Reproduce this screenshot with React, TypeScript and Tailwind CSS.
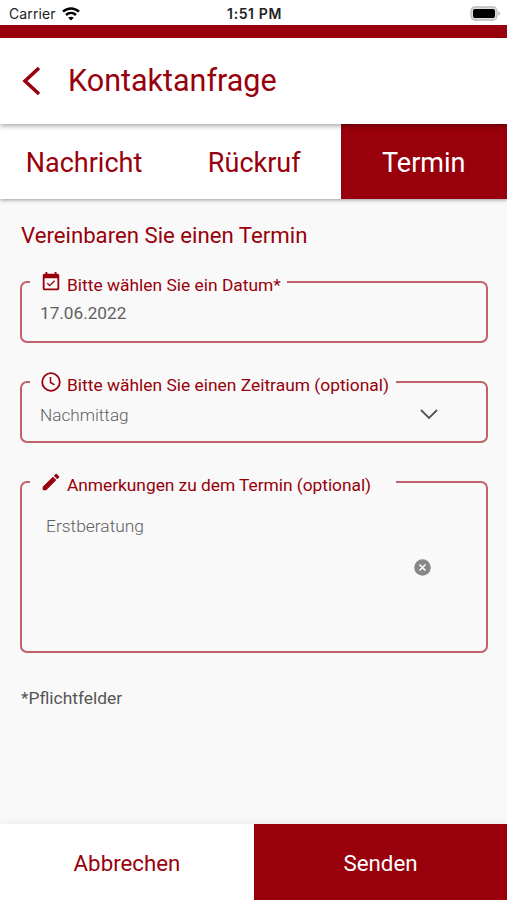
import type { ReactNode } from 'react';
import { MdEdit, MdEventAvailable } from 'react-icons/md';

interface FieldProps {
  icon: ReactNode;
  label: string;
  legendClass: string;
  className: string;
  children: ReactNode;
}

function Field({ icon, label, legendClass, className, children }: FieldProps) {
  return (
    <fieldset className={`rounded-[7px] border-2 border-[#bf626a] px-2 ${className}`}>
      <legend className={`flex h-6 items-center pl-[10px] ${legendClass}`}>
        <span className="flex w-[27px] shrink-0">{icon}</span>
        <span className="whitespace-nowrap pt-[6px] text-[17.4px] leading-5 text-[#98000b]">{label}</span>
      </legend>
      {children}
    </fieldset>
  );
}

function StatusBar() {
  return (
    <div className="flex h-[25px] items-center justify-between pl-[9px] pr-[6px] pt-[2px] font-[Inter,sans-serif] text-[14px] text-[#222]">
      <div className="flex w-[100px] items-center gap-[6px]">
        <span className="tracking-[0.1px]">Carrier</span>
        <svg width="18" height="14" viewBox="0 0 18 14" fill="none" stroke="#000" strokeWidth="2.5">
          <path d="M1 4.700C5.600.4 12.400.4 17 4.700" />
          <path d="M4 8c2.900-2.800 7.100-2.800 10 0" />
          <path d="M6.200 10.700 9 13.600l2.800-2.900c-1.500-1.400-4.100-1.400-5.600 0Z" fill="#000" stroke="none" />
        </svg>
      </div>
      <span className="pr-[1px] font-semibold tracking-[0.6px]">1:51 PM</span>
      <div className="flex w-[100px] justify-end">
        <svg width="31" height="15" viewBox="0 0 31 15">
          <rect x="1" y="1" width="26" height="13" rx="4" fill="#ddd" stroke="#bdbdbd" strokeWidth="1.3" />
          <rect x="3" y="3" width="22" height="9" rx="2" fill="#000" />
          <path d="M28.500 5.300c2 .8 2 3.600 0 4.400Z" fill="#aaa" />
        </svg>
      </div>
    </div>
  );
}

export default function App() {
  return (
    <div className="flex h-[900px] w-[507px] flex-col overflow-hidden bg-[#f9f9f9] font-[Roboto,sans-serif] text-[#98000b]">
      <div className="relative z-10 bg-white shadow-[0_2px_5px_rgba(0,0,0,0.35)]">
        <StatusBar />
        <div className="h-[12.500px] bg-[#98000b]" />
        <header className="flex h-[86px] items-center pl-[22px]">
          <svg width="19" height="30" viewBox="0 0 19 30" fill="none" stroke="#98000b" strokeWidth="3.600">
            <path d="M17 2 3 15l14 13" />
          </svg>
          <h1 className="pl-[27px] pt-px text-[30.500px] leading-none">Kontaktanfrage</h1>
        </header>
      </div>

      <nav className="flex h-[75px] shrink-0 bg-white text-[27px] shadow-[0_1px_4px_rgba(0,0,0,0.4)]">
        <button className="w-[168px] pt-[4px]">Nachricht</button>
        <button className="w-[172.500px] pt-[4px]">Rückruf</button>
        <button className="flex-1 bg-[#98000b] pt-[4px] text-white">Termin</button>
      </nav>

      <main className="flex-1 pl-[20px] pr-[19px] pt-[22px]">
        <h2 className="pl-px text-[22.200px] leading-[28px]">Vereinbaren Sie einen Termin</h2>

        <Field
          icon={<MdEventAvailable size={22} />}
          label="Bitte wählen Sie ein Datum*"
          legendClass="w-[257px]"
          className="mt-[21px] h-[73px]"
        >
          <p className="pl-[10px] pt-[9px] text-[17.200px] leading-5 text-[#606060]">17.06.2022</p>
        </Field>

        <Field
          icon={
            <svg width="21" height="20" viewBox="-1 0 21 20" fill="none" stroke="#98000b" strokeWidth="1.8">
              <circle cx="10" cy="10" r="8.800" />
              <path d="M9.500 5v5.500l4 2.300" strokeWidth="1.500" />
            </svg>
          }
          label="Bitte wählen Sie einen Zeitraum (optional)"
          legendClass="w-[366px]"
          className="mt-[27px] h-[73px]"
        >
          <div className="flex items-center justify-between pl-[10px] pr-[40px] pt-[11px]">
            <span className="text-[17.200px] font-light leading-5 text-[#606060]">Nachmittag</span>
            <svg width="18" height="11" viewBox="0 0 18 11" fill="none" stroke="#555" strokeWidth="1.800">
              <path d="m1 1 8 8 8-8" />
            </svg>
          </div>
        </Field>

        <Field
          icon={<MdEdit size={22} />}
          label="Anmerkungen zu dem Termin (optional)"
          legendClass="w-[366px] tracking-[-0.05px]"
          className="mt-[27px] h-[183px]"
        >
          <p className="pl-[16px] pt-[22px] text-[17.400px] font-light leading-5 text-[#606060]">Erstberatung</p>
          <div className="mt-[23px] flex justify-end pr-[47px]">
            <svg width="17" height="17" viewBox="0 0 17 17">
              <circle cx="8.500" cy="8.500" r="8.300" fill="#888" />
              <path d="m5.500 5.500 6 6m0-6-6 6" stroke="#fff" strokeWidth="1.500" />
            </svg>
          </div>
        </Field>

        <p className="mt-[35px] pl-px text-[17.400px] leading-5 text-[#555]">*Pflichtfelder</p>
      </main>

      <footer className="flex h-[76px] shrink-0 text-[22.300px] shadow-[0_-1px_8px_rgba(0,0,0,0.06)]">
        <button className="w-[254px] bg-white pt-[3px]">Abbrechen</button>
        <button className="flex-1 bg-[#98000b] pt-[3px] text-white">Senden</button>
      </footer>
    </div>
  );
}
